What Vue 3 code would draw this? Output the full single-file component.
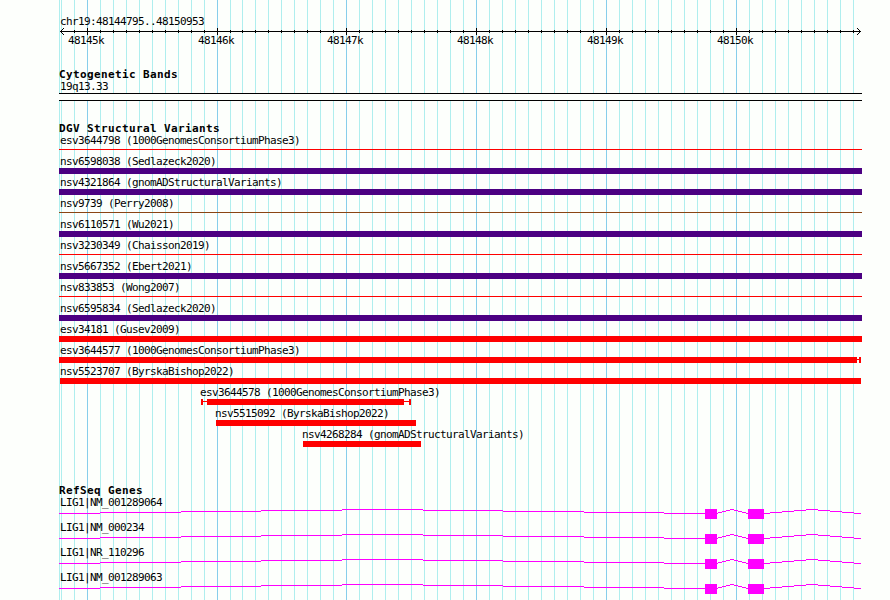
<script setup>
const region = 'chr19:48144795..48150953'

// one grid line per 100 bp, the pixel rounding slips once after 48146.1k
const gridLines = []
for (let i = 0; i <= 61; i++) {
  gridLines.push({ x: 61 + i * 13 - (i > 13 ? 1 : 0), major: i % 10 === 2 })
}

const scaleLabels = ['48145k', '48146k', '48147k', '48148k', '48149k', '48150k']

const variants = [
  { name: 'esv3644798 (1000GenomesConsortiumPhase3)', color: 'red', thin: true },
  { name: 'nsv6598038 (Sedlazeck2020)', color: 'indigo' },
  { name: 'nsv4321864 (gnomADStructuralVariants)', color: 'indigo' },
  { name: 'nsv9739 (Perry2008)', color: 'brown', thin: true },
  { name: 'nsv6110571 (Wu2021)', color: 'indigo' },
  { name: 'nsv3230349 (Chaisson2019)', color: 'red', thin: true },
  { name: 'nsv5667352 (Ebert2021)', color: 'indigo' },
  { name: 'nsv833853 (Wong2007)', color: 'red', thin: true },
  { name: 'nsv6595834 (Sedlazeck2020)', color: 'indigo' },
  { name: 'esv34181 (Gusev2009)', color: 'red' },
  { name: 'esv3644577 (1000GenomesConsortiumPhase3)', color: 'red', width: 798, capRight: true },
  { name: 'nsv5523707 (ByrskaBishop2022)', color: 'red', start: 1, width: 801, labelShift: -1 },
  { name: 'esv3644578 (1000GenomesConsortiumPhase3)', color: 'red', start: 142, width: 197, capLeft: true, capRight: true, labelShift: -2 },
  { name: 'nsv5515092 (ByrskaBishop2022)', color: 'red', start: 157, width: 200, labelShift: -2 },
  { name: 'nsv4268284 (gnomADStructuralVariants)', color: 'red', start: 244, width: 118, labelShift: -2 }
]

const genes = ['LIG1|NM_001289064', 'LIG1|NM_000234', 'LIG1|NR_110296', 'LIG1|NM_001289063']

// x positions where each intron line changes height
const introns = [
  [0, 41, 122, 202, 283, 364, 444, 525, 605, 646],
  [658, 659, 663, 667, 671, 675, 679, 683, 687, 689],
  [705, 711, 723, 735, 747, 759, 771, 783, 795, 802]
]
const exons = [
  { x: 646, width: 12 },
  { x: 689, width: 16 }
]

const intronSteps = []
introns.forEach((xs) => {
  for (let i = 0; i < xs.length - 1; i++) {
    intronSteps.push({ x: xs[i], y: 4 - (i < 5 ? i : 8 - i), width: xs[i + 1] - xs[i] })
  }
})
</script>

<template>
  <div class="browser">
    <svg class="grid" width="890" height="600" shape-rendering="crispEdges">
      <rect class="minor" x="59" y="0" width="1" height="600" />
      <rect
        v-for="line in gridLines"
        :key="line.x"
        :class="line.major ? 'major' : 'minor'"
        :x="line.x"
        y="0"
        width="1"
        height="600"
      />
    </svg>

    <main class="tracks">
      <section class="scale">
        <p class="label">{{ region }}</p>
        <svg class="ruler" width="803" height="9" viewBox="59 27 803 9" shape-rendering="crispEdges">
          <rect x="60" y="31" width="801" height="1" />
          <rect
            v-for="line in gridLines.slice(1)"
            :key="line.x"
            :x="line.x"
            :y="line.major ? 28 : 30"
            width="1"
            :height="line.major ? 7 : 3"
          />
          <path d="M61 30h1v1h-1zM62 29h1v1h-1zM63 28h1v1h-1zM61 32h1v1h-1zM62 33h1v1h-1zM63 34h1v1h-1z" />
          <path d="M859 30h1v1h-1zM858 29h1v1h-1zM857 28h1v1h-1zM859 32h1v1h-1zM858 33h1v1h-1zM857 34h1v1h-1z" />
        </svg>
        <div class="numbers">
          <span v-for="label in scaleLabels" :key="label" class="label">{{ label }}</span>
        </div>
      </section>

      <section class="bands">
        <h2>Cytogenetic Bands</h2>
        <p class="label">19q13.33</p>
        <div class="band"></div>
      </section>

      <section class="variants">
        <h2>DGV Structural Variants</h2>
        <div
          v-for="v in variants"
          :key="v.name"
          class="variant"
          :style="{ paddingLeft: (v.start || 0) + 'px' }"
        >
          <p class="label" :style="{ marginLeft: (v.labelShift || 0) + 'px' }">{{ v.name }}</p>
          <div class="feature" :class="v.color">
            <i v-if="v.capLeft" class="cap"></i>
            <i v-if="v.capLeft" class="whisker long"></i>
            <div class="bar" :class="{ thin: v.thin }" :style="{ width: (v.width || 803) + 'px' }"></div>
            <i v-if="v.capRight" class="whisker" :class="{ wide: v.capLeft }"></i>
            <i v-if="v.capRight" class="cap"></i>
          </div>
        </div>
      </section>

      <section class="genes">
        <h2>RefSeq Genes</h2>
        <div v-for="gene in genes" :key="gene" class="gene">
          <p class="label">{{ gene }}</p>
          <svg width="803" height="10" shape-rendering="crispEdges">
            <rect v-for="s in intronSteps" :key="s.x" :x="s.x" :y="s.y" :width="s.width" height="1" />
            <rect v-for="e in exons" :key="e.x" :x="e.x" y="0" :width="e.width" height="10" />
          </svg>
        </div>
      </section>
    </main>
  </div>
</template>

<style>
body {
  margin: 0;
  background: #fdfffc;
}
</style>

<style scoped>
.browser {
  position: relative;
  width: 890px;
  height: 600px;
  overflow: hidden;
  background: #fdfffc;
  color: #000;
  font-family: 'DejaVu Sans Mono', monospace;
}

.grid {
  position: absolute;
  top: 0;
  left: 0;
}

.minor {
  fill: #afeeee;
}

.major {
  fill: #87ceeb;
}

.tracks {
  position: relative;
  width: 803px;
  margin-left: 59px;
  padding-top: 15px;
}

svg {
  display: block;
}

.label {
  display: block;
  height: 13px;
  margin: 0;
  padding-left: 1px;
  font-size: 11px;
  line-height: 13px;
  letter-spacing: -0.622px;
  white-space: pre;
}

h2 {
  height: 12px;
  margin: 0;
  font-size: 11px;
  font-weight: bold;
  line-height: 13px;
  letter-spacing: 0.378px;
  white-space: pre;
}

/* scale */
.scale {
  height: 53px;
}

.scale > .label {
  height: 12px;
}

.numbers {
  display: flex;
  gap: 93px;
  margin-top: -2px;
  padding-left: 8px;
}

.numbers .label {
  width: 36px;
}

.numbers .label:nth-child(3) {
  margin-left: -1px;
}

/* cytogenetic bands */
.bands {
  height: 54px;
}

.band {
  height: 6px;
  border-top: 1px solid #000;
  border-bottom: 1px solid #000;
  background: #fdfffc;
}

/* structural variants */
.variants {
  height: 362px;
}

.variant {
  height: 21px;
}

.feature {
  display: flex;
  align-items: center;
  height: 6px;
}

.bar {
  height: 6px;
}

.bar.thin {
  height: 1px;
  margin-bottom: 1px;
}

.cap {
  width: 2px;
  height: 6px;
}

.whisker {
  width: 2px;
  height: 1px;
  margin-bottom: 1px;
}

.whisker.long {
  width: 4px;
}

.whisker.wide {
  width: 5px;
}

.red > * {
  background: #f00;
}

.indigo > * {
  background: #4b0082;
}

.brown > * {
  background: #8b4513;
}

/* genes */
.gene {
  height: 25px;
}

.gene svg {
  fill: #f0f;
}
</style>
